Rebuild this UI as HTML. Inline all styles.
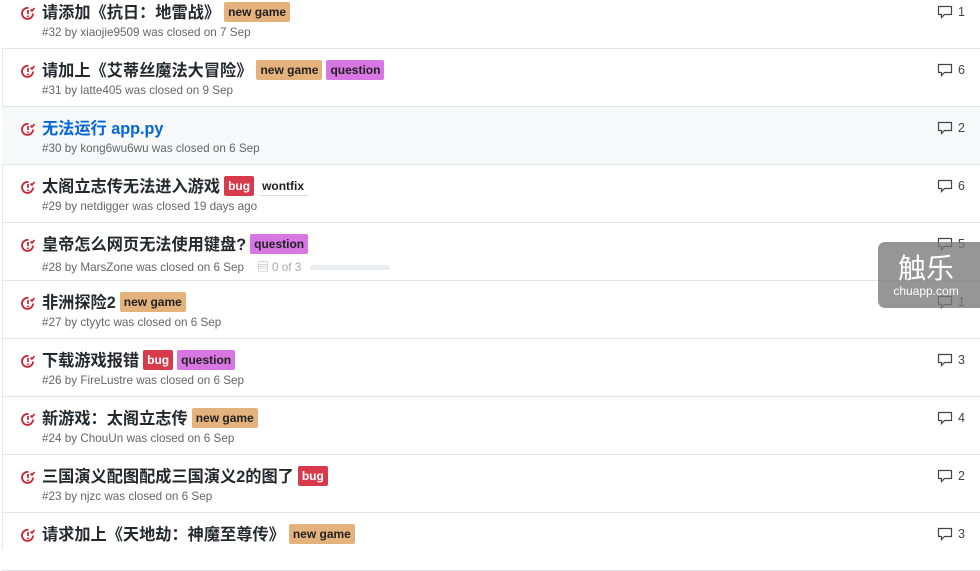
<!DOCTYPE html><html><head><meta charset="utf-8"><style>
body{margin:0;width:980px;height:550px;overflow:hidden;background:#fff;font-family:"Liberation Sans","Noto Sans CJK SC",sans-serif;position:relative}
.r{position:absolute;left:2px;right:0;height:57px;border-bottom:1px solid #e1e4e8}
.lb{position:absolute;left:2px;top:0;bottom:0;width:1px;background:#e1e4e8}
.ic{position:absolute;left:18px;top:14px}
.t{position:absolute;left:40px;top:10px;font-size:16.2px;font-weight:bold;color:#24292e;white-space:nowrap;line-height:24px}
.t.b{color:#0366d6}
.l{display:inline-block;font-size:12px;font-weight:bold;padding:0 4px;line-height:20px;border-radius:2px;vertical-align:2px;margin-left:4px;font-family:"Liberation Sans",sans-serif}
.ng{background:#e4b27c;color:#222}.q{background:#d876e3;color:#222}.bg{background:#d73a4a;color:#fff}.wf{background:#fff;color:#222;box-shadow:inset 0 -1px 0 #ddd}
.m{position:absolute;left:40px;top:35px;font-size:11.7px;color:#666;white-space:nowrap}
.c{position:absolute;left:935px;top:13px;font-size:12.5px;color:#444;display:flex;align-items:center;gap:5px}
</style></head><body>
<div class="lb"></div>
<svg width="0" height="0" style="position:absolute"><defs>
<symbol id="i" viewBox="0 0 16 16"><path d="M13 8.5A5.5 5.5 0 1 1 8.5 3" fill="none" stroke="#cb2431" stroke-width="1.8"/><path d="M8 5v4M8 10.5v1.5M10.5 4.5l1.5 1.5L14.5 3" fill="none" stroke="#cb2431" stroke-width="1.7"/></symbol>
<symbol id="cm" viewBox="0 0 16 16"><path d="M1.5 2.5h13v8h-7l-3 3v-3h-3z" fill="none" stroke="#444" stroke-width="1.2"/></symbol>
</defs></svg>

<div class="r" style="top:-9px;background:#fff"><svg class="ic" width="16" height="16"><use href="#i"/></svg><div class="t">请添加《抗日：地雷战》<span class="l ng">new game</span></div><div class="m">#32 by xiaojie9509 was closed on 7 Sep</div><div class="c"><svg width="16" height="16"><use href="#cm"/></svg>1</div></div>
<div class="r" style="top:49px"><svg class="ic" width="16" height="16"><use href="#i"/></svg><div class="t">请加上《艾蒂丝魔法大冒险》<span class="l ng">new game</span><span class="l q">question</span></div><div class="m">#31 by latte405 was closed on 9 Sep</div><div class="c"><svg width="16" height="16"><use href="#cm"/></svg>6</div></div>
<div class="r" style="top:107px;background:#f6f8fa"><svg class="ic" width="16" height="16"><use href="#i"/></svg><div class="t b">无法运行 app.py</div><div class="m">#30 by kong6wu6wu was closed on 6 Sep</div><div class="c"><svg width="16" height="16"><use href="#cm"/></svg>2</div></div>
<div class="r" style="top:165px"><svg class="ic" width="16" height="16"><use href="#i"/></svg><div class="t">太阁立志传无法进入游戏<span class="l bg">bug</span><span class="l wf">wontfix</span></div><div class="m">#29 by netdigger was closed 19 days ago</div><div class="c"><svg width="16" height="16"><use href="#cm"/></svg>6</div></div>
<div class="r" style="top:223px"><svg class="ic" width="16" height="16"><use href="#i"/></svg><div class="t">皇帝怎么网页无法使用键盘?<span class="l q">question</span></div><div class="m">#28 by MarsZone was closed on 6 Sep &nbsp;&nbsp; <span style="color:#aaa">▤ 0 of 3</span> <span style="display:inline-block;width:80px;height:5px;background:#eaecef;border-radius:3px;vertical-align:middle;margin-left:6px"></span></div><div class="c"><svg width="16" height="16"><use href="#cm"/></svg>5</div></div>
<div class="r" style="top:281px"><svg class="ic" width="16" height="16"><use href="#i"/></svg><div class="t">非洲探险2<span class="l ng">new game</span></div><div class="m">#27 by ctyytc was closed on 6 Sep</div><div class="c"><svg width="16" height="16"><use href="#cm"/></svg>1</div></div>
<div class="r" style="top:339px"><svg class="ic" width="16" height="16"><use href="#i"/></svg><div class="t">下载游戏报错<span class="l bg">bug</span><span class="l q">question</span></div><div class="m">#26 by FireLustre was closed on 6 Sep</div><div class="c"><svg width="16" height="16"><use href="#cm"/></svg>3</div></div>
<div class="r" style="top:397px"><svg class="ic" width="16" height="16"><use href="#i"/></svg><div class="t">新游戏：太阁立志传<span class="l ng">new game</span></div><div class="m">#24 by ChouUn was closed on 6 Sep</div><div class="c"><svg width="16" height="16"><use href="#cm"/></svg>4</div></div>
<div class="r" style="top:455px"><svg class="ic" width="16" height="16"><use href="#i"/></svg><div class="t">三国演义配图配成三国演义2的图了<span class="l bg">bug</span></div><div class="m">#23 by njzc was closed on 6 Sep</div><div class="c"><svg width="16" height="16"><use href="#cm"/></svg>2</div></div>
<div class="r" style="top:513px"><svg class="ic" width="16" height="16"><use href="#i"/></svg><div class="t">请求加上《天地劫：神魔至尊传》<span class="l ng">new game</span></div><div class="m"></div><div class="c"><svg width="16" height="16"><use href="#cm"/></svg>3</div></div>

<div style="position:absolute;left:878px;top:242px;width:110px;height:66px;background:rgba(120,120,120,.78);border-radius:7px;color:#fff;text-align:center">
<div style="font-size:28px;font-weight:normal;line-height:34px;margin-top:8px;padding-right:14px;font-family:'Noto Sans CJK SC',sans-serif">触乐</div>
<div style="font-size:12px;line-height:14px;padding-right:14px">chuapp.com</div></div>
</body></html>
